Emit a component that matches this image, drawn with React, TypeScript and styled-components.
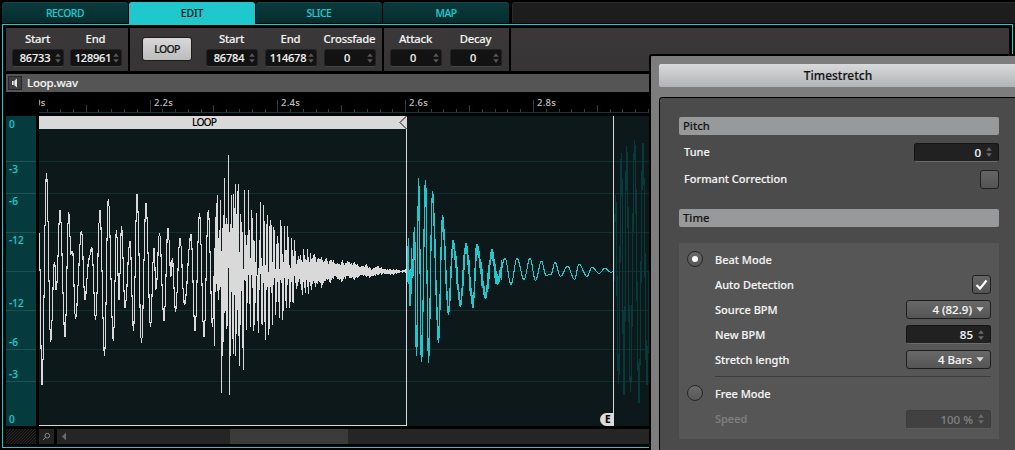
import React from 'react';
import styled, { createGlobalStyle, css } from 'styled-components';

const CYAN = '#1fc8cd';

const GlobalStyle = createGlobalStyle`
  * { box-sizing: border-box; }
  html, body { margin: 0; background: #000; overflow: hidden; }
  body {
    font-family: 'Noto Sans', 'Open Sans', sans-serif;
    font-size: 11px;
    font-weight: 500;
    color: #f2f2f2;
    -webkit-text-stroke: 0.14px currentColor;
  }
`;

const Screen = styled.div`
  position: relative;
  width: 1015px;
  height: 450px;
  overflow: hidden;
  background: #000;
  white-space: nowrap;
`;

/* ---------- tabs ---------- */
const Tabs = styled.div`
  display: flex;
  gap: 1px;
  height: 24px;
  padding: 2px 0 0 2px;
`;
const Tab = styled.div<{ $active?: boolean }>`
  width: 126px;
  height: ${p => (p.$active ? 23 : 21)}px;
  line-height: 20px;
  text-align: center;
  font-size: 10.3px;
  letter-spacing: ${p => (p.$active ? 0 : -0.45)}px;
  border-radius: 3px 3px 0 0;
  color: ${p => (p.$active ? '#04181a' : CYAN)};
  background: ${p => (p.$active ? CYAN : 'linear-gradient(#0b3a3c, #062c2e)')};
  border-top: 1px solid ${p => (p.$active ? CYAN : '#174547')};
`;
const TabFiller = styled.div`
  flex: 1;
  height: 21px;
  margin-left: 2px;
  border-radius: 3px 0 0 0;
  background: #1d1d1d;
  border-top: 1px solid #2a2a2a;
  border-left: 1px solid #2a2a2a;
`;

/* ---------- main frame ---------- */
const Frame = styled.div`
  display: flex;
  flex-direction: column;
  width: 1011px;
  height: 424px;
  margin-left: 2px;
  padding: 3px;
  border: 1px solid ${CYAN};
`;
const Toolbar = styled.div`
  display: flex;
  gap: 2px;
  height: 43px;
`;
const Group = styled.div<{ $w?: number; $pad?: string; $gap?: number }>`
  display: flex;
  gap: ${p => p.$gap ?? 7}px;
  padding: ${p => p.$pad ?? '0'};
  ${p => (p.$w ? css`width: ${p.$w}px;` : css`flex: 1;`)}
  background: linear-gradient(#3a3838, #363434);
`;
const Param = styled.div`
  display: flex;
  flex-direction: column;
  align-items: center;
  width: 51px;
`;
const ParamLabel = styled.div`
  height: 21px;
  line-height: 22px;
  font-size: 11.3px;
  letter-spacing: -0.2px;
`;
const ParamField = styled.div`
  display: flex;
  align-items: center;
  width: 52px;
  height: 18px;
  padding-right: 2px;
  border-radius: 3px;
  background: #121212;
  border: 1px solid #222;
  border-bottom-color: #474545;
  font-size: 11px;
`;
const ParamValue = styled.div`
  flex: 1;
  padding-left: 3px;
  text-align: center;
  line-height: 15px;
  padding-bottom: 1px;
  letter-spacing: -0.2px;
`;
const LoopButton = styled.div`
  width: 50px;
  height: 24px;
  margin: 9px 6px 0 0;
  line-height: 22px;
  text-align: center;
  font-size: 10.5px;
  letter-spacing: -0.7px;
  color: #161616;
  background: linear-gradient(#d8d8d8, #bcbcbc);
  border: 1px solid #1c1c1c;
  border-radius: 3px;
`;

const FileBar = styled.div`
  display: flex;
  align-items: center;
  gap: 5px;
  height: 18px;
  margin-top: 3px;
  padding-left: 2px;
  background: #555;
  font-size: 11.5px;
  letter-spacing: -0.2px;
  line-height: 18px;
`;
const SpeakerButton = styled.div`
  display: flex;
  width: 14px;
  height: 14px;
  background: #3f3f3f;
  border: 1px solid #262626;
`;
const Ruler = styled.svg`
  display: block;
  width: 610px;
  height: 24px;
  margin-left: 33px;
  font-size: 9.5px;
  letter-spacing: 0.3px;
`;
const Editor = styled.div`
  display: flex;
  gap: 3px;
  height: 310px;
`;
const Scale = styled.div`
  width: 30px;
  background: #053b3d;
  color: ${CYAN};
  font-size: 10px;
`;
const ScaleMark = styled.div<{ $h: number; $line?: boolean; $low?: boolean }>`
  display: flex;
  align-items: ${p => (p.$low ? 'flex-end' : 'flex-start')};
  height: ${p => p.$h}px;
  padding-left: 3px;
  line-height: ${p => (p.$low ? 13 : 15)}px;
  border-top: 1px solid ${p => (p.$line ? '#1d5254' : 'transparent')};
`;
const WaveArea = styled.div`
  position: relative;
  width: 610px;
  background: #0c1819;
`;
const WaveSvg = styled.svg`
  display: block;
`;
const LoopBand = styled.div`
  position: absolute;
  left: 0;
  top: 0;
  width: 368px;
  height: 310px;
  border-right: 1px solid #d9d9d9;
  border-bottom: 1px solid #d9d9d9;
`;
const LoopHeader = styled.div`
  position: relative;
  height: 13px;
  padding-left: 153px;
  line-height: 13px;
  font-size: 10.3px;
  letter-spacing: -0.9px;
  color: #000;
  background: #d9d9d9;
  -webkit-text-stroke: 0;
`;
const LoopHandle = styled.svg`
  position: absolute;
  right: -1px;
  top: 0;
`;
const EndMarker = styled.div`
  position: absolute;
  left: 561px;
  top: 0;
  width: 14px;
  height: 310px;
  border-right: 1px solid #d9d9d9;
  display: flex;
  align-items: flex-end;
`;
const EndBadge = styled.div`
  width: 14px;
  height: 13px;
  line-height: 13px;
  padding-left: 5px;
  border-radius: 7px 0 0 7px;
  background: #dcdcdc;
  color: #000;
  font-size: 10px;
  font-weight: 700;
`;
const BottomRow = styled.div`
  display: flex;
  gap: 3px;
  height: 15px;
  margin-top: 3px;
`;
const Hatch = styled.div`
  width: 30px;
  background: repeating-linear-gradient(135deg, #101010 0 1.4px, #292929 1.4px 2.1px);
`;
const ZoomButton = styled.div`
  width: 15px;
  background: #232222;
`;
const Track = styled.div`
  display: flex;
  width: 592px;
  background: #262525;
`;
const TrackArrow = styled.svg`
  margin-right: 161px;
`;
const Thumb = styled.div`
  width: 118px;
  background: #3b3b39;
`;

/* ---------- dialog ---------- */
const Dialog = styled.div`
  position: absolute;
  left: 649px;
  top: 54px;
  width: 376px;
  height: 420px;
  padding: 8px 0 0 8px;
  background: #7d7d7d;
  border: 2px solid #000;
  border-radius: 3px 0 0 0;
`;
const DialogTitle = styled.div`
  width: 358px;
  height: 23px;
  line-height: 23px;
  text-align: center;
  color: #111;
  font-size: 12px;
  background: linear-gradient(#d9dadb, #b2b3b4);
  border-radius: 2px;
`;
const DialogBody = styled.div`
  height: 370px;
  margin-top: 10px;
  padding: 19px 0 0 19px;
  background: #4b4b4b;
  border: 1px solid #000;
  border-radius: 3px 0 0 0;
`;
const SectionTitle = styled.div`
  width: 320px;
  height: 18px;
  padding-left: 4px;
  line-height: 17px;
  color: #161616;
  font-size: 11.2px;
  letter-spacing: 0.05px;
  background: #98999a;
  border-radius: 2px;
`;
const Row = styled.div<{ $h: number; $w?: number; $left?: number; $dim?: boolean }>`
  display: flex;
  align-items: center;
  justify-content: space-between;
  width: ${p => p.$w ?? 320}px;
  height: ${p => p.$h}px;
  padding-left: ${p => p.$left ?? 5}px;
  color: ${p => (p.$dim ? '#808080' : '#f4f4f4')};
`;
const RowLabel = styled.div`
  padding-bottom: 1px;
`;
const Panel = styled.div`
  width: 320px;
  height: 196px;
  margin-top: 16px;
  padding: 4px 0 0 8px;
  background: #565656;
`;
const ModeLine = styled.div<{ $h: number }>`
  display: flex;
  align-items: center;
  gap: 12px;
  height: ${p => p.$h}px;
  margin-bottom: 1px;
`;
const ModeLabel = styled.div`
  padding-top: 1px;
`;
const Radio = styled.div`
  display: flex;
  align-items: center;
  justify-content: center;
  width: 16px;
  height: 16px;
  border-radius: 50%;
  border: 1px solid #262626;
  background: linear-gradient(#6a6a6a, #575757);
`;
const RadioDot = styled.div`
  width: 6px;
  height: 6px;
  border-radius: 50%;
  background: #fff;
`;
const CheckBox = styled.div`
  display: flex;
  width: 19px;
  height: 19px;
  border-radius: 3px;
  border: 1px solid #202020;
  background: linear-gradient(#666, #535353);
`;
const Box = styled.div<{ $kind: 'input' | 'menu' | 'off' }>`
  display: flex;
  align-items: center;
  justify-content: flex-end;
  gap: ${p => (p.$kind === 'menu' ? 4 : 5)}px;
  width: 85px;
  height: 19px;
  padding-right: 6px;
  border-radius: 3px;
  font-size: 11.5px;
  ${p => p.$kind === 'input' && css`background: #212121; border: 1px solid #141414; border-bottom-color: #6c6c6c;`}
  ${p => p.$kind === 'menu' && css`background: linear-gradient(#686868, #555); border: 1px solid #1d1d1d;`}
  ${p => p.$kind === 'off' && css`background: #414141; border: 1px solid #3c3c3c; border-bottom-color: #5c5c5c;`}
`;
const Divider = styled.div`
  width: 276px;
  height: 1px;
  margin: 4px 0 0 28px;
  background: #3c3c3c;
`;

const ArrowSvg = styled.svg`
  flex: none;
`;
const Spinner = ({ color = '#6a6a6a' }: { color?: string }) => (
  <ArrowSvg width="6" height="10" viewBox="0 0 6 10">
    <path d="M3 0.2 5.8 3.8H0.2zM3 9.8 0.2 6.2H5.8z" fill={color} />
  </ArrowSvg>
);
const Caret = () => (
  <ArrowSvg width="8" height="5" viewBox="0 0 8 5">
    <path d="M0.3 0.3H7.7L4 4.8z" fill="#dcdcdc" />
  </ArrowSvg>
);

/* ---------- wave data: [x, y] turning points in editor pixels ---------- */
type Pt = [number, number];
const LEAD: Pt[] = [
  [39, 233], [42, 384], [46.5, 173], [50.7, 341], [54.5, 262], [56.3, 289], [60, 210], [65, 336], [68.7, 212],
  [71, 252], [72.5, 251], [75.5, 318], [81.5, 231], [85, 299], [89, 258], [91.8, 247], [95.5, 319], [100, 210],
  [104.5, 355], [108.3, 199], [113.3, 340], [116.5, 230], [119, 299], [121.5, 226], [125, 307], [130, 241],
  [133.5, 330], [137, 194], [141.5, 342], [146, 203], [150.5, 326], [154, 248], [156, 288], [159.5, 233], [164, 320],
  [168, 228], [171, 275], [172.3, 258], [175.5, 311], [180, 238], [184.5, 304], [191, 234], [195, 330], [199.5, 213],
  [204, 336], [208.3, 210], [212.5, 326], [215, 250],
];
const TOPS: Pt[] = [
  [214, 272], [215, 217], [216, 203], [217, 195], [218, 238], [219, 230], [220, 200], [221, 251], [222, 228], [223, 215],
  [224, 178], [225, 224], [226, 218], [227, 224], [228, 155], [229, 232], [230, 224], [231, 195], [232, 228], [233, 194],
  [234, 208], [235, 184], [236, 214], [237, 191], [238, 184], [239, 252], [240, 214], [241, 222], [242, 232], [243, 269],
  [244, 190], [245, 235], [246, 245], [247, 235], [248, 190], [249, 230], [250, 258], [251, 210], [252, 218], [253, 240],
  [254, 241], [255, 262], [256, 213], [257, 275], [258, 268], [259, 240], [260, 202], [261, 258], [262, 266], [263, 205],
  [264, 221], [265, 265], [266, 224], [267, 215], [268, 272], [269, 226], [270, 220], [271, 225], [272, 262], [273, 227],
  [274, 230], [275, 269], [276, 244], [277, 236], [278, 243], [279, 269], [280, 220], [281, 226], [282, 254], [283, 262],
  [284, 226], [285, 250], [286, 250], [287, 226], [288, 237], [289, 265], [290, 268], [291, 238], [292, 250], [293, 256],
  [294, 240], [295, 251], [296, 264], [297, 260], [298, 256], [299, 259], [300, 255], [301, 260], [302, 262], [303, 249],
  [304, 255], [305, 259], [306, 260], [307, 249], [308, 257], [309, 262], [310, 253], [311, 260], [314, 256], [316, 262],
  [320, 259], [323, 263], [326, 260], [328, 264], [331, 261], [335, 265], [340, 265], [342, 262], [345, 266], [347, 262],
  [350, 265], [354, 264], [360, 268], [366, 266], [371, 270], [376, 267], [385, 270], [395, 270], [401, 271], [407, 269],
];
const BOTTOMS: Pt[] = [
  [214, 346], [215, 292], [216, 284], [217, 291], [218, 300], [219, 290], [220, 287], [221, 393], [222, 356], [223, 342],
  [224, 313], [225, 311], [226, 329], [227, 326], [228, 268], [229, 395], [230, 356], [231, 292], [232, 339], [233, 354],
  [234, 295], [235, 356], [236, 334], [237, 310], [238, 336], [239, 366], [240, 325], [241, 291], [242, 348], [243, 370],
  [244, 280], [245, 281], [246, 330], [247, 303], [248, 275], [249, 304], [250, 327], [251, 275], [252, 288], [253, 331],
  [254, 325], [255, 303], [256, 276], [257, 321], [258, 333], [259, 290], [260, 274], [261, 324], [262, 325], [263, 283],
  [264, 322], [265, 340], [266, 290], [267, 287], [268, 335], [269, 329], [270, 287], [271, 293], [272, 325], [273, 285],
  [274, 278], [275, 315], [276, 302], [277, 282], [278, 302], [279, 318], [280, 280], [281, 283], [282, 320], [283, 311],
  [284, 278], [285, 301], [286, 308], [287, 285], [288, 279], [289, 308], [290, 302], [291, 282], [292, 302], [293, 303],
  [294, 276], [296, 289], [298, 282], [299, 279], [302, 295], [303, 282], [305, 293], [306, 280], [308, 294], [309, 282],
  [311, 289], [313, 278], [315, 285], [318, 279], [321, 285], [326, 277], [330, 281], [334, 275], [341, 280], [346, 275],
  [354, 278], [361, 274], [370, 276], [380, 273], [392, 274], [400, 272], [407, 272],
];
const TAIL: Pt[] = [
  [407, 271], [408, 246], [410, 305], [412, 259], [413, 268], [414.3, 227], [416.6, 355], [418.6, 178], [421.6, 361],
  [425.4, 180], [428.5, 362], [432.5, 191], [438.5, 342], [442.5, 215], [448.5, 314], [453, 240], [460.5, 306],
  [466, 243], [473, 307], [477, 244], [485.5, 298], [492, 249], [497.5, 284], [505, 258], [511, 284], [517, 258],
  [524, 279], [530, 258], [535.5, 280], [541.5, 261], [546, 275], [551, 274], [555, 262], [560.5, 276], [567.5, 266],
  [574.5, 279], [579, 264], [587, 276], [592, 267], [599, 273], [605, 268], [611, 272], [613, 271],
];
const NEXT: Pt[] = [
  [614, 270], [615.5, 195], [618.5, 383], [621.3, 153], [624, 394], [626.6, 146], [630.5, 391], [634.6, 140],
  [639, 402], [643, 143], [647, 384], [651, 170],
];

const sample = (pts: Pt[], x: number, smooth: boolean) => {
  const i = pts.findIndex((p, k) => k > 0 && p[0] >= x);
  if (i < 1) return pts[pts.length - 1][1];
  const [x0, y0] = pts[i - 1];
  const [x1, y1] = pts[i];
  const t = Math.max(0, (x - x0) / (x1 - x0));
  const e = smooth ? (1 - Math.cos(Math.PI * t)) / 2 : t;
  return y0 + (y1 - y0) * e;
};
// One vertical bar for each pixel column, spanning the values the curve takes there.
const bar = (x: number, lo: number, hi: number) =>
  `M${x - 39} ${Math.round(lo) - 116}h1v${Math.max(1, Math.round(hi) - Math.round(lo))}h-1z`;
// `rough` thickens the bars towards the centre line, where fast partials ride on the main swing.
const columns = (pts: Pt[], from: number, to: number, rough: (x: number) => number = () => 0) => {
  let d = '';
  for (let x = from; x < to; x++) {
    let lo = Infinity;
    let hi = -Infinity;
    for (let k = 0; k <= 10; k++) {
      const y = sample(pts, x + k / 10, true);
      lo = Math.min(lo, y);
      hi = Math.max(hi, y);
    }
    const r = rough(x);
    d += bar(x, lo - (hi > 271 ? r : 0), hi + (lo < 271 ? r : 0) + 0.6);
  }
  return d;
};
const leadPath = columns(LEAD, 39, 215, x => (x * 5) % 3);
let densePath = '';
for (let x = 214; x < 407; x++) {
  const j = x > 310 ? ((x * 7) % 4) * (407 - x) / 70 + (x % 3 === 0 ? 1 : 0) : 0;
  densePath += bar(x, sample(TOPS, x, false) - j * 0.7, sample(BOTTOMS, x, false) + j * 0.7);
}
const tailPath = columns(TAIL, 407, 613, x => (x < 446 ? 5 + ((x * 7) % 9) : x < 502 ? 5 + ((x * 7) % 5) : 0));
const nextPath = columns(NEXT, 614, 649, x => 5 + ((x * 7) % 9));

const LEVELS: [string, number][] = [
  ['0', 45], ['-3', 32], ['-6', 39], ['-12', 39], ['-12', 39], ['-6', 39], ['-3', 32], ['0', 45],
];
const GRID = [45, 77, 116, 155, 194, 233, 265];
const TICKS = Array.from({ length: 48 }, (_, i) => i);

const Field = ({ label, value }: { label: string; value: string }) => (
  <Param>
    <ParamLabel>{label}</ParamLabel>
    <ParamField>
      <ParamValue>{value}</ParamValue>
      <Spinner color="#585858" />
    </ParamField>
  </Param>
);

export default function App() {
  return (
    <Screen>
      <GlobalStyle />
      <Tabs>
        <Tab>RECORD</Tab>
        <Tab $active>EDIT</Tab>
        <Tab>SLICE</Tab>
        <Tab>MAP</Tab>
        <TabFiller />
      </Tabs>
      <Frame>
        <Toolbar>
          <Group $w={122} $pad="0 0 0 6px">
            <Field label="Start" value="86733" />
            <Field label="End" value="128961" />
          </Group>
          <Group $w={252} $pad="0 0 0 12px" $gap={8}>
            <LoopButton>LOOP</LoopButton>
            <Field label="Start" value="86784" />
            <Field label="End" value="114678" />
            <Field label="Crossfade" value="0" />
          </Group>
          <Group $w={125} $pad="0 0 0 6px" $gap={9}>
            <Field label="Attack" value="0" />
            <Field label="Decay" value="0" />
          </Group>
          <Group />
        </Toolbar>
        <FileBar>
          <SpeakerButton>
            <svg width="12" height="12" viewBox="0 0 12 12">
              <path d="M3 4H5L8 1.5V10.5L5 8H3z" fill="#e6e6e6" />
              <path d="M5 3.5v5" stroke="#3f3f3f" strokeWidth="0.7" />
            </svg>
          </SpeakerButton>
          Loop.wav
        </FileBar>
        <Ruler viewBox="39 92 610 24">
          <path d="M39 112.5H649" stroke="#123b3d" />
          {TICKS.map(i => {
            const x = Math.floor(47.8 + i * 12.78) + 0.5;
            const h = (i + 2) % 10 === 0 ? 12 : (i + 7) % 10 === 0 ? 7 : 3;
            return <path key={i} d={`M${x} 112V${112 - h}`} stroke="#174547" />;
          })}
          <g fill="#c0c0c0">
            <text x="35" y="106">0s</text>
            <text x="154" y="106">2.2s</text>
            <text x="281" y="106">2.4s</text>
            <text x="409" y="106">2.6s</text>
            <text x="537" y="106">2.8s</text>
          </g>
        </Ruler>
        <Editor>
          <Scale>
            {LEVELS.map(([text, h], i) => (
              <ScaleMark key={i} $h={h} $line={i > 0} $low={i > 3}>{text}</ScaleMark>
            ))}
          </Scale>
          <WaveArea>
            <WaveSvg width="610" height="310" shapeRendering="crispEdges">
              {GRID.map(y => <rect key={y} x="0" y={y} width="610" height="1" fill="#12302f" />)}
              <path d={leadPath} fill="#d9d9d9" />
              <path d={densePath} fill="#d9d9d9" />
              <path d={tailPath} fill={CYAN} />
              <path d={nextPath} fill="#053b3c" />
            </WaveSvg>
            <LoopBand>
              <LoopHeader>
                LOOP
                <LoopHandle width="8" height="13" viewBox="0 0 8 13">
                  <path d="M8 0V13H7L0.5 6.5 7 0z" fill="#d9d9d9" />
                  <path d="M7.5 0 1 6.5 7.5 13" fill="none" stroke="#111" />
                </LoopHandle>
              </LoopHeader>
            </LoopBand>
            <EndMarker>
              <EndBadge>E</EndBadge>
            </EndMarker>
          </WaveArea>
        </Editor>
        <BottomRow>
          <Hatch />
          <ZoomButton>
            <svg width="15" height="15" viewBox="0 0 15 15">
              <circle cx="8.3" cy="6.7" r="2.3" fill="none" stroke="#8a8a8a" />
              <path d="M6.6 8.4 4 11" stroke="#8a8a8a" />
            </svg>
          </ZoomButton>
          <Track>
            <TrackArrow width="12" height="15" viewBox="0 0 12 15">
              <path d="M9 3.5V11.5L5 7.5z" fill="#6a6a6a" />
            </TrackArrow>
            <Thumb />
          </Track>
        </BottomRow>
      </Frame>

      <Dialog>
        <DialogTitle>Timestretch</DialogTitle>
        <DialogBody>
          <SectionTitle>Pitch</SectionTitle>
          <Row $h={34}>
            <RowLabel>Tune</RowLabel>
            <Box $kind="input">0<Spinner /></Box>
          </Row>
          <Row $h={20}>
            <RowLabel>Formant Correction</RowLabel>
            <CheckBox />
          </Row>
          <Row $h={20} />
          <SectionTitle>Time</SectionTitle>
          <Panel>
            <ModeLine $h={24}>
              <Radio><RadioDot /></Radio>
              Beat Mode
            </ModeLine>
            <Row $h={25} $w={304} $left={28}>
              Auto Detection
              <CheckBox>
                <svg width="17" height="17" viewBox="0 0 17 17">
                  <path d="M3.5 9 7 12.5 13.5 4.5" fill="none" stroke="#fff" strokeWidth="2.2" />
                </svg>
              </CheckBox>
            </Row>
            <Row $h={25} $w={304} $left={28}>
              Source BPM
              <Box $kind="menu">4 (82.9)<Caret /></Box>
            </Row>
            <Row $h={25} $w={304} $left={28}>
              New BPM
              <Box $kind="input">85<Spinner /></Box>
            </Row>
            <Row $h={25} $w={304} $left={28}>
              Stretch length
              <Box $kind="menu">4 Bars<Caret /></Box>
            </Row>
            <Divider />
            <ModeLine $h={31}>
              <Radio />
              <ModeLabel>Free Mode</ModeLabel>
            </ModeLine>
            <Row $h={20} $w={304} $left={28} $dim>
              <RowLabel>Speed</RowLabel>
              <Box $kind="off">100 %<Spinner color="#6c6c6c" /></Box>
            </Row>
          </Panel>
        </DialogBody>
      </Dialog>
    </Screen>
  );
}
